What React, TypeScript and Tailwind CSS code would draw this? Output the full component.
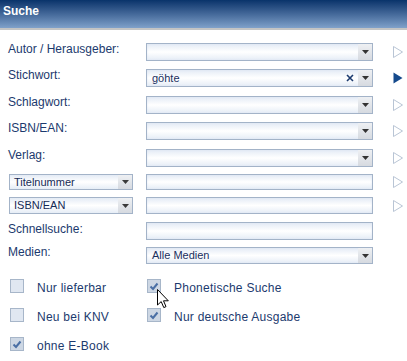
import React from "react";

const labelCls = "text-[12px] leading-[14px] text-[#1c3a6e]";

function Drop({ small }: { small?: boolean }) {
  return (
    <div className="w-[14px] h-full flex items-center justify-center bg-gradient-to-b from-[#eef0f3] to-[#d6dae0] shrink-0">
      <svg width="7" height="4" viewBox="0 0 7 4">
        <path d="M0 0 H7 L3.5 4 Z" fill={small ? "#3a3a3a" : "#333"} />
      </svg>
    </div>
  );
}

function Box({
  h = 18,
  text,
  drop,
  clear,
}: {
  h?: number;
  text?: string;
  drop?: boolean;
  clear?: boolean;
}) {
  return (
    <div
      className={`w-[227px] ${h === 18 ? "h-[18px]" : h === 17 ? "h-[17px]" : "h-[16px]"} border border-[#a3b3c8] flex items-stretch bg-gradient-to-b from-[#e4ebf5] via-white to-[#e6edf6] shadow-[inset_0_0_2px_#dbe4f1]`}
    >
      <div className="flex-1 flex items-center pl-[5px] text-[11px] leading-[13px] text-[#1a2f5e]">
        {text}
      </div>
      {clear && (
        <div className="w-[16px] flex items-center justify-center">
          <svg width="8" height="8" viewBox="0 0 8 8">
            <path d="M1 1 L7 7 M7 1 L1 7" stroke="#1c3a6e" strokeWidth="1.6" />
          </svg>
        </div>
      )}
      {drop && <Drop />}
    </div>
  );
}

function Arrow({ active }: { active?: boolean }) {
  return (
    <div className="ml-[20px] flex items-center h-full">
      <svg width="10" height="12" viewBox="0 0 10 12">
        {active ? (
          <path d="M0.5 0.5 L9.5 6 L0.5 11.5 Z" fill="#154a8c" />
        ) : (
          <path d="M0.5 0.5 L9.5 6 L0.5 11.5 Z" fill="white" stroke="#b9c5d5" strokeWidth="1" />
        )}
      </svg>
    </div>
  );
}

function SmallSelect({ text }: { text: string }) {
  return (
    <div className="ml-[9px] w-[124px] h-full border border-[#a3b3c8] flex items-stretch bg-gradient-to-b from-[#e4ebf5] via-white to-[#e6edf6]">
      <div className="flex-1 flex items-center pl-[4px] text-[11px] leading-[13px] text-[#152a55]">
        {text}
      </div>
      <Drop small />
    </div>
  );
}

function Check({ checked }: { checked?: boolean }) {
  return (
    <div
      className={`w-[14px] h-[14px] border border-[#a7b6c9] ${checked ? "bg-[#cdd7e4]" : "bg-[#e0e7f1]"} flex items-center justify-center shrink-0`}
    >
      {checked && (
        <svg width="12" height="12" viewBox="0 0 12 12">
          <path d="M2.5 6.5 L5 9 L9.5 3.5" fill="none" stroke="#4a6fa5" strokeWidth="2" />
        </svg>
      )}
    </div>
  );
}

function CheckItem({ checked, label }: { checked?: boolean; label: string }) {
  return (
    <div className="flex items-start">
      <Check checked={checked} />
      <span className="ml-[13px] mt-[2px] text-[12px] leading-[14px] tracking-[0.25px] text-[#1c3a6e]">
        {label}
      </span>
    </div>
  );
}

export default function App() {
  return (
    <div className="w-[407px] h-[361px] bg-white relative overflow-hidden font-['Liberation_Sans',Arial,sans-serif]">
      <div className="h-[28px] bg-gradient-to-b from-[#08336a] to-[#80a1ca] px-[3px] pt-[4px] text-white font-bold text-[12px] leading-[14px]">
        Suche
      </div>
      <div className="h-[2px] bg-[#c4c4c4]" />

      <div className="flex flex-col">
        <div className="mt-[13px] h-[18px] flex items-stretch">
          <div className={`w-[146px] pl-[8px] -mt-px ${labelCls}`}>Autor / Herausgeber:</div>
          <Box drop />
          <Arrow />
        </div>
        <div className="mt-[8px] h-[18px] flex items-stretch">
          <div className={`w-[146px] pl-[8px] -mt-px ${labelCls}`}>Stichwort:</div>
          <Box drop clear text="göhte" />
          <Arrow active />
        </div>
        <div className="mt-[9px] h-[18px] flex items-stretch">
          <div className={`w-[146px] pl-[8px] -mt-px ${labelCls}`}>Schlagwort:</div>
          <Box drop />
          <Arrow />
        </div>
        <div className="mt-[8px] h-[18px] flex items-stretch">
          <div className={`w-[146px] pl-[8px] -mt-px ${labelCls}`}>ISBN/EAN:</div>
          <Box drop />
          <Arrow />
        </div>
        <div className="mt-[9px] h-[18px] flex items-stretch">
          <div className={`w-[146px] pl-[8px] -mt-px ${labelCls}`}>Verlag:</div>
          <Box drop />
          <Arrow />
        </div>
        <div className="mt-[7px] h-[16px] flex items-stretch">
          <div className="w-[146px]">
            <SmallSelect text="Titelnummer" />
          </div>
          <Box h={16} />
          <Arrow />
        </div>
        <div className="mt-[7px] h-[17px] flex items-stretch">
          <div className="w-[146px]">
            <SmallSelect text="ISBN/EAN" />
          </div>
          <Box h={17} />
          <Arrow />
        </div>
        <div className="mt-[8px] h-[18px] flex items-stretch">
          <div className={`w-[146px] pl-[8px] ${labelCls}`}>Schnellsuche:</div>
          <Box />
        </div>
        <div className="mt-[7px] h-[17px] flex items-stretch">
          <div className={`w-[146px] pl-[8px] -mt-[2px] ${labelCls}`}>Medien:</div>
          <Box h={17} drop text="Alle Medien" />
        </div>
      </div>

      <div className="mt-[15px] pl-[10px] grid grid-cols-[137px_1fr] gap-y-[13px]">
        <CheckItem label="Nur lieferbar" />
        <CheckItem checked label="Phonetische Suche" />
        <CheckItem label="Neu bei KNV" />
        <CheckItem checked label="Nur deutsche Ausgabe" />
        <CheckItem checked label="ohne E-Book" />
      </div>

      <svg
        className="absolute left-[157px] top-[289px]"
        width="13"
        height="20"
        viewBox="0 0 13 20"
      >
        <path
          d="M0.5 0.5 L0.5 16 L4.2 12.6 L6.8 18.6 L9 17.6 L6.5 11.8 L11.3 11.8 Z"
          fill="white"
          stroke="black"
          strokeWidth="1"
          strokeLinejoin="miter"
        />
      </svg>
    </div>
  );
}
